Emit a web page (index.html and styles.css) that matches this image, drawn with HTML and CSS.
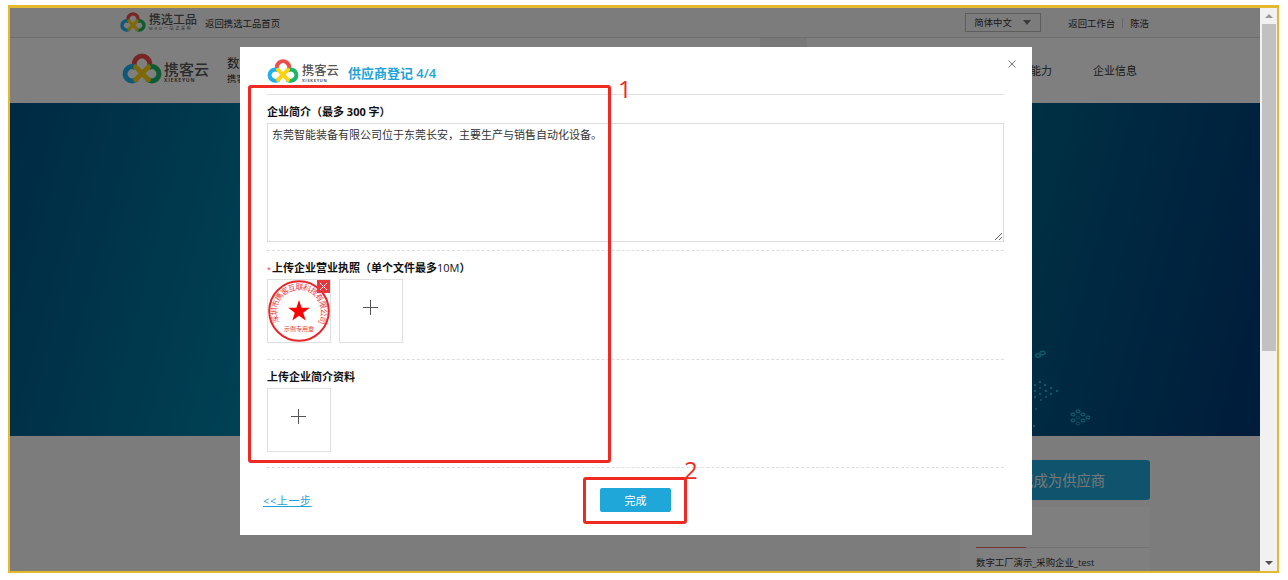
FILE: index.html
```html
<!DOCTYPE html>
<html lang="zh-CN">

<head>
    <meta charset="UTF-8">
    <meta name="viewport" content="width=device-width, initial-scale=1.0">
    <title>供应商登记</title>
    <link rel="stylesheet" href="styles.css">
</head>

<body>
    <svg class="symbols" width="0" height="0">
        <symbol id="logo" viewBox="0 0 62 47">
            <g fill="none" stroke-width="8">
                <path d="M21 23A12 12 0 1 1 41 23" stroke="#ef4c49" />
                <path d="M23 40A11 11 0 1 1 21 22" stroke="#1fb0ee" />
                <path d="M39 40A11 11 0 1 0 41 22" stroke="#1cb766" />
                <path d="M21 21L41 41M41 21L21 41" stroke="#fdd20c" stroke-width="7.500" stroke-linecap="round" />
            </g>
        </symbol>
    </svg>

    <div class="frame">
        <div class="page">
            <div class="topbar">
                <svg class="top-logo"><use href="#logo" /></svg>
                <div class="brand brand-top">
                    <b>携选工品</b>
                    <small>MRO一站式采购</small>
                </div>
                <a class="back-home">返回携选工品首页</a>
                <div class="lang">简体中文<i class="caret"></i></div>
                <a>返回工作台</a>
                <span class="split"></span>
                <a>陈浩</a>
            </div>

            <div class="header">
                <svg class="header-logo"><use href="#logo" /></svg>
                <div class="brand brand-header">
                    <b>携客云</b>
                    <small>XIEKEYUN</small>
                </div>
                <div class="slogan">
                    <h2>数</h2>
                    <p>携客</p>
                </div>
                <div class="nav">
                    <span class="nav-active"></span>
                    <a>能力</a>
                    <a>企业信息</a>
                </div>
            </div>

            <div class="banner">
                <svg class="dots" width="70" height="90" viewBox="0 0 70 90" fill="none" stroke="#1cb4cc">
                    <ellipse cx="5" cy="9.500" rx="2.500" ry="1.700" stroke-width="1.500" />
                    <ellipse cx="9.500" cy="7" rx="2.500" ry="1.700" stroke-width="1.500" />
                    <g stroke="none" fill="#1cb4cc">
                        <circle cx="7" cy="36" r="1.200" /><circle cx="2" cy="39" r="1.200" />
                        <circle cx="12" cy="39" r="1.200" /><circle cx="7" cy="42" r="1" />
                        <circle cx="18" cy="42" r="1.200" /><circle cx="2" cy="45" r="1.200" />
                        <circle cx="13" cy="45" r="1.200" /><circle cx="24" cy="45" r="1.200" />
                        <circle cx="7" cy="48" r="1.200" /><circle cx="18" cy="48" r="1.200" />
                        <circle cx="2" cy="51" r="1.200" /><circle cx="13" cy="51" r="1" />
                        <circle cx="8" cy="54" r="1" /><circle cx="3" cy="63" r="1" />
                        <circle cx="1" cy="80" r="1.200" />
                    </g>
                    <g stroke-width="1.200">
                        <ellipse cx="45" cy="65.500" rx="2" ry="1.300" />
                        <ellipse cx="40" cy="68.500" rx="2" ry="1.300" />
                        <ellipse cx="50" cy="68.500" rx="2" ry="1.300" />
                        <ellipse cx="45" cy="71.500" rx="2" ry="1.300" opacity=".5" />
                        <ellipse cx="55" cy="71.500" rx="2" ry="1.300" />
                        <ellipse cx="40" cy="74.500" rx="2" ry="1.300" />
                        <ellipse cx="50" cy="74.500" rx="2" ry="1.300" />
                        <ellipse cx="45" cy="77.500" rx="2" ry="1.300" opacity=".6" />
                    </g>
                </svg>
            </div>

            <div class="side">
                <div class="join-btn">登记成为供应商</div>
                <div class="card">
                    <div class="card-head"></div>
                    <p>数字工厂演示_采购企业_test</p>
                </div>
            </div>

            <div class="mask"></div>
        </div>

        <div class="scrollbar">
            <i class="arrow-up"></i>
            <div class="thumb"></div>
            <i class="arrow-down"></i>
        </div>
    </div>

    <div class="modal">
        <div class="modal-head">
            <svg class="modal-logo"><use href="#logo" /></svg>
            <div class="brand brand-modal">
                <b>携客云</b>
                <small>XIEKEYUN</small>
            </div>
            <h1>供应商登记 4/4</h1>
            <svg class="close" width="8" height="8" viewBox="0 0 8 8" stroke="#777">
                <path d="M.5.5l7 7M7.500.5l-7 7" />
            </svg>
        </div>

        <div class="section intro">
            <label>企业简介&#xFF08;最多 300 字&#xFF09;</label>
            <textarea spellcheck="false">东莞智能装备有限公司位于东莞长安&#xFF0C;主要生产与销售自动化设备。</textarea>
        </div>

        <div class="section license">
            <label><em>*</em>上传企业营业执照&#xFF08;单个文件最多<span>10M</span>&#xFF09;</label>
            <div class="uploads">
                <div class="box">
                    <svg width="62" height="62" viewBox="0 0 62 62">
                        <circle cx="31" cy="31" r="29.800" fill="none" stroke="#e8262a" stroke-width="2" />
                        <path id="arc" d="M11.500 42A22 22 0 1 1 50.500 42" fill="none" />
                        <text class="seal-text"><textPath href="#arc" textLength="91">深圳市携客互联科技有限公司</textPath></text>
                        <path d="M31 20l2.600 7.800h8.200l-6.600 4.900 2.500 7.900-6.700-4.900-6.700 4.900 2.500-7.900-6.600-4.900h8.200z" fill="#f00" />
                        <text class="seal-label" x="31" y="51" text-anchor="middle">示例专用章</text>
                    </svg>
                    <svg class="remove" width="13" height="13" viewBox="0 0 13 13" stroke="#fff">
                        <path d="M3 3l7 7M10 3l-7 7" />
                    </svg>
                </div>
                <div class="box add"></div>
            </div>
        </div>

        <div class="section material">
            <label>上传企业简介资料</label>
            <div class="uploads">
                <div class="box add"></div>
            </div>
        </div>

        <div class="modal-foot">
            <a class="prev">&lt;&lt;上一步</a>
            <button>完成</button>
        </div>
    </div>

    <div class="mark mark-form"></div>
    <div class="mark-num num-one">1</div>
    <div class="mark mark-submit"></div>
    <div class="mark-num num-two">2</div>
</body>

</html>
```

FILE: styles.css
```css
* {
    box-sizing: border-box;
}

body {
    margin: 0;
    padding: 5px 0 0 8px;
    height: 580px;
    overflow: hidden;
    position: relative;
    background-color: #fff;
    color: #333;
    font-family: "Open Sans", "Noto Sans CJK SC", sans-serif;
    font-size: 11px;
}

h1,
h2,
p {
    margin: 0;
    font-weight: normal;
}

.symbols {
    position: absolute;
}

.frame {
    display: flex;
    width: 1271px;
    height: 568px;
    border: 2px solid #e6b82e;
    border-top-width: 3px;
}

.page {
    position: relative;
    flex: 1;
    overflow: hidden;
    background-color: #f8f8f8;
}

.mask {
    position: absolute;
    inset: 0;
    background-color: rgba(0, 0, 0, 0.5);
}

/* top bar */
.topbar {
    display: flex;
    align-items: center;
    height: 30px;
    padding: 0 111px 0 110px;
    border-bottom: 1px solid #dcdcdc;
    font-size: 9.4px;
}

.top-logo {
    width: 26px;
    height: 20px;
    margin-top: -2px;
}

.brand {
    display: flex;
    flex-direction: column;
    color: #555;
    line-height: 1;
    white-space: nowrap;
}

.brand b {
    font-weight: 500;
}

.brand-top {
    width: 49px;
    margin-left: 3px;
    font-size: 12px;
}

.brand-top small {
    margin-top: 1px;
    font-size: 4px;
    letter-spacing: 1.8px;
}

.back-home {
    margin-left: 7px;
    margin-right: auto;
}

.lang {
    display: flex;
    align-items: center;
    justify-content: space-between;
    width: 76px;
    height: 19px;
    margin-top: -1px;
    margin-right: 27px;
    padding: 0 9px 0 8px;
    border: 1px solid #bbb;
}

.caret {
    border: 4px solid transparent;
    border-top: 5px solid #777;
    border-bottom: 0;
}

.split {
    width: 1px;
    height: 10px;
    margin: 0 7px;
    background-color: #ccc;
}

/* header */
.header {
    display: flex;
    align-items: center;
    height: 65px;
    padding: 0 123px 0 112px;
    background-color: #fff;
}

.header-logo {
    width: 40px;
    height: 31px;
    margin-top: -4px;
}

.brand-header {
    margin-left: 2px;
    padding-top: 4px;
    font-size: 15px;
}

.brand-header small {
    margin-top: 1px;
    font-size: 5px;
    font-weight: bold;
    letter-spacing: 0.8px;
}

.slogan {
    margin-left: 18px;
    line-height: 15px;
}

.slogan h2 {
    font-size: 12.5px;
}

.slogan p {
    font-size: 9.4px;
}

.nav {
    display: flex;
    align-items: center;
    flex: 1;
    height: 65px;
    justify-content: flex-end;
}

.nav a {
    margin-left: 41px;
    margin-top: -2px;
}

.nav-active {
    width: 47px;
    height: 65px;
    margin-right: 182px;
    background-color: #f0f0f0;
}

/* banner */
.banner {
    display: flex;
    justify-content: flex-end;
    align-items: flex-end;
    height: 333px;
    padding-right: 157px;
    background: linear-gradient(105deg, #005488 0%, #006896 10%, #0088ac 26%, #0088ac 50%, #006488 75%, #004c80 88%, #003874 100%);
}

/* right column */
.side {
    width: 190px;
    margin: 24px 110px 0 auto;
}

.join-btn {
    height: 40px;
    border-radius: 3px;
    background-color: #1fa9d9;
    color: #eee;
    font-size: 14.3px;
    line-height: 42px;
    text-align: center;
}

.card {
    height: 80px;
    margin-top: 7px;
    padding-left: 16px;
    background-color: #fff;
}

.card-head {
    height: 41px;
    background: linear-gradient(#f06060, #f06060) left bottom / 50px 1px no-repeat, linear-gradient(#e4e4e4, #e4e4e4) left bottom / 100% 1px no-repeat;
}

.card p {
    font-size: 9.4px;
    line-height: 30px;
}

/* scrollbar */
.scrollbar {
    display: flex;
    flex-direction: column;
    align-items: center;
    width: 17px;
    background-color: #f1f1f1;
}

.arrow-up {
    margin: 6px 0 6px;
    border: 4px solid transparent;
    border-top: 0;
    border-bottom: 4px solid #999;
}

.thumb {
    width: 14px;
    height: 327px;
    background-color: #c1c1c1;
}

.arrow-down {
    margin-top: auto;
    margin-bottom: 6px;
    border: 4px solid transparent;
    border-top: 4px solid #505050;
    border-bottom: 0;
}

/* dialog */
.modal {
    position: absolute;
    top: 47px;
    left: 240px;
    width: 792px;
    height: 488px;
    padding: 0 28px 0 27px;
    background-color: #fff;
}

.modal-head {
    display: flex;
    align-items: center;
    height: 48px;
    border-bottom: 1px solid #e2e2e2;
}

.modal-logo {
    width: 32px;
    height: 24px;
}

.brand-modal {
    margin-left: 3px;
    padding-top: 7px;
    font-size: 12.3px;
}

.brand-modal small {
    margin-top: 1px;
    font-size: 4px;
    font-weight: bold;
    letter-spacing: 0.7px;
}

.modal-head h1 {
    margin-left: 9px;
    margin-top: 4px;
    color: #1fa3d6;
    font-size: 13px;
    font-weight: 600;
}

.close {
    margin: -13px -12px 0 auto;
}

.section {
    border-bottom: 1px dashed #dedede;
}

.section label {
    display: block;
    height: 16px;
    color: #111;
    font-weight: bold;
    line-height: 16px;
}

.intro {
    height: 156px;
    padding-top: 9px;
}

.intro textarea {
    display: block;
    width: 737px;
    height: 119px;
    margin-top: 3px;
    padding: 3px 4px;
    border: 1px solid #dcdcdc;
    outline: none;
    color: #333;
    font: inherit;
    line-height: 16px;
}

.license {
    height: 109px;
    padding-top: 9px;
}

.license em {
    display: inline-block;
    width: 5px;
    color: #e33;
    font-size: 7px;
    font-style: normal;
    font-weight: normal;
    line-height: 8px;
}

.license label span {
    font-weight: normal;
}

.uploads {
    display: flex;
    gap: 8px;
    margin-top: 3px;
}

.box {
    position: relative;
    width: 64px;
    height: 64px;
    border: 1px solid #dfdfdf;
}

.add {
    background: linear-gradient(#555, #555) 23px 27px / 15px 1px no-repeat, linear-gradient(#555, #555) 30px 20px / 1px 15px no-repeat;
}

.remove {
    position: absolute;
    top: 0;
    right: 0;
    background-color: #e5393d;
}

.seal-text {
    fill: #ec3a3c;
    font-size: 8px;
}

.seal-label {
    fill: #ec3a3c;
    font-size: 6px;
}

.material {
    height: 108px;
    padding-top: 9px;
}

.modal-foot {
    display: flex;
    align-items: center;
    height: 64px;
    margin-left: -4px;
}

.prev {
    width: 337px;
    color: #1fa3d6;
    letter-spacing: 0.6px;
    text-decoration: underline;
}

.modal-foot button {
    width: 71px;
    height: 24px;
    padding: 0;
    border: none;
    border-radius: 2px;
    background-color: #1fa7da;
    color: #fff;
    font: inherit;
}

/* step marks over the dialog */
.mark {
    position: absolute;
    border: 3px solid #ee2a22;
    border-radius: 3px;
}

.mark-form {
    top: 85px;
    left: 248px;
    width: 363px;
    height: 378px;
}

.mark-submit {
    top: 477px;
    left: 583px;
    width: 104px;
    height: 47px;
}

.mark-num {
    position: absolute;
    color: #ee2a22;
    font-size: 24px;
    line-height: 24px;
}

.num-one {
    top: 77px;
    left: 618px;
}

.num-two {
    top: 458px;
    left: 684px;
}
```
